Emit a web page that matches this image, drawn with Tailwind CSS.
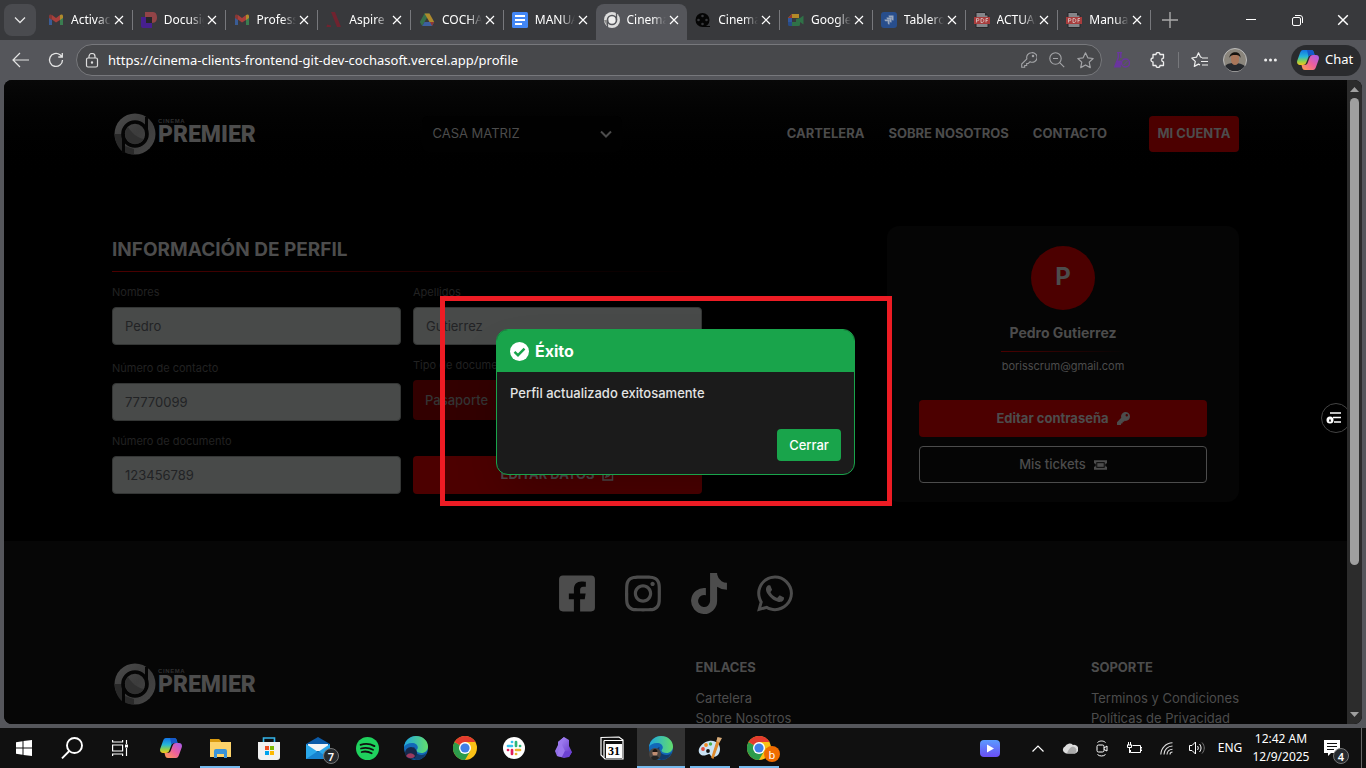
<!DOCTYPE html>
<html lang="es">
<head>
<meta charset="utf-8">
<title>Cinema Premier - Perfil</title>
<script src="https://cdn.jsdelivr.net/npm/@tailwindcss/browser@4"></script>
</head>
<body class="flex h-screen flex-col overflow-hidden bg-[#55565b] font-['Noto_Sans',sans-serif] text-white">
<svg class="absolute size-0" aria-hidden="true">
  <defs>
    <linearGradient id="cp1" x1="0" y1="0" x2="0" y2="1"><stop offset="0" stop-color="#1473e6"/><stop offset=".45" stop-color="#26b7d6"/><stop offset=".75" stop-color="#8fd14a"/><stop offset="1" stop-color="#f7c41d"/></linearGradient>
    <linearGradient id="cp2" x1="1" y1="0" x2="0" y2="1"><stop offset="0" stop-color="#a45cf0"/><stop offset=".5" stop-color="#ee5f9c"/><stop offset="1" stop-color="#ffa04d"/></linearGradient>
    <linearGradient id="eg1" x1="0" y1="0" x2="1" y2="0"><stop offset="0" stop-color="#1fa7e0"/><stop offset="1" stop-color="#63dd6b"/></linearGradient>
    <linearGradient id="pl" x1="0" y1="0" x2="0" y2="1"><stop offset="0" stop-color="#5b9bff"/><stop offset="1" stop-color="#6a4df5"/></linearGradient>
    <linearGradient id="ob" x1="0" y1="0" x2="1" y2="1"><stop offset="0" stop-color="#b79cff"/><stop offset="1" stop-color="#5b2bc4"/></linearGradient>
    <linearGradient id="lg" x1="0" y1="0" x2="1" y2="1"><stop offset="0" stop-color="#4c4c4c"/><stop offset=".5" stop-color="#3c3c3c"/><stop offset="1" stop-color="#474747"/></linearGradient>
  </defs>
  <symbol id="x" viewBox="0 0 10 10"><path d="M1 1l8 8M9 1l-8 8" stroke="#fff" stroke-width="1.2" fill="none"/></symbol>
  <symbol id="gmail" viewBox="0 0 16 16"><path d="M1 4v9h3V7z" fill="#3a5c95"/><path d="M15 4v9h-3V7z" fill="#3a7d50"/><path d="M1 4l3-1 4 3 4-3v5L8 10.500 4 7.500z" fill="#a83f3b"/><path d="M1 4v2l3 2V3C2.500 2 1 2.500 1 4z" fill="#853835"/><path d="M15 4v2l-3 2V3c1.500-1 3-.5 3 1z" fill="#b08a2c"/></symbol>
  <symbol id="pdf" viewBox="0 0 16 16"><path d="M2 .5h9l3 3v12H2z" fill="#858589" stroke="#26272a"/><path d="M11 .5v3h3z" fill="#26272a"/><rect y="5" width="16" height="7" fill="#a83c3c"/><path d="M2.500 10.500v-4h1.300a1 1 0 010 2.200H2.500M7 6.500v4h1c2.500 0 2.500-4 0-4zM12 10.500v-4h2M12 8.500h1.700" stroke="#d5bcbc" fill="none" stroke-width=".9"/></symbol>
  <symbol id="copilot" viewBox="0 0 22 20"><path d="M6 0h8c2 0 2.500 1 3 3l.5 2h-3c-2 0-3 1-3.500 3L9.500 12c-.7 2-1.500 3-3.500 3H3c-2.500 0-3.500-2-2.700-4.500L3 3C3.700 1 4.500 0 6 0z" fill="url(#cp1)"/><path d="M16 20H8c-2 0-2.500-1-3-3l-.5-2h3c2 0 3-1 3.500-3L12.500 8c.7-2 1.500-3 3.500-3h3c2.500 0 3.500 2 2.700 4.500L19 17c-.7 2-1.500 3-3 3z" fill="url(#cp2)"/><path d="M10 0h4c2 0 2.500 1 3 3l.5 2h-3c-1.500 0-2.500.5-3 2z" fill="#1659c9"/></symbol>
  <symbol id="chrome" viewBox="0 0 24 24"><circle cx="12" cy="12" r="12" fill="#fbc116"/><path d="M12 12L1.600 6A12 12 0 0012 24l5.200-9z" fill="#2c9c4b"/><path d="M12 12L1.600 6a12 12 0 0120.800 0H12z" fill="#e33b2e"/><circle cx="12" cy="12" r="6" fill="#fff"/><circle cx="12" cy="12" r="4.600" fill="#3f7fe8"/></symbol>
  <symbol id="edge" viewBox="0 0 24 24"><circle cx="12" cy="12" r="12" fill="#1268b8"/><path d="M0 11C1 4 6 0 12 0c7 0 12 5 12 10.500 0 4-3 6.500-6.500 6.500-3 0-5-1-5-2.500 0-.8 1.300-1.300 1.300-3C13.800 9 11.500 7 8 7c-4 0-7 2-8 4z" fill="url(#eg1)"/><path d="M23 16c-2 5-6 8-11 8-4-2-6-5-5-9 .5-2 2-3.500 3.500-4-1 4 2 8 7 8 2.500 0 4-1 5.500-3z" fill="#123a6c"/></symbol>
  <symbol id="mark" viewBox="0 0 42 42"><circle cx="21" cy="21" r="20.500" fill="url(#lg)"/><path d="M.5 21h10v19C5 37 1 30 .5 21z" fill="#292929"/><path d="M11 33l9 3v5.500c-4 0-7-1-9-2z" fill="#2a2a2a"/><circle cx="21" cy="21" r="12" fill="none" stroke="#050505" stroke-width="3.600"/><path d="M32.500 4v18M9.500 21v19" stroke="#050505" stroke-width="3"/><path d="M14 14a10 10 0 007 17c4 0 7-2 9-5C23 25 18 20 14 14z" fill="#303030"/></symbol>
</svg>

<!-- Tab strip -->
<header class="flex h-10 shrink-0 items-center bg-[#38393c] pl-1 text-xs">
  <button aria-label="Buscar pestañas" class="mr-1 grid size-8 place-items-center rounded-lg bg-[#4a4b4f]"><svg class="size-3" viewBox="0 0 12 12"><path d="M1 3.500l5 5 5-5" fill="none" stroke="#e5e5e5" stroke-width="1.300"/></svg></button>
  <nav class="flex h-full w-[1111px] items-center">
    <a href="#" class="flex h-5 w-0 flex-1 items-center border-r border-[#77787c] px-2"><svg class="size-4 shrink-0"><use href="#gmail"/></svg><span class="mr-[3px] ml-[7px] w-0 flex-1 overflow-hidden whitespace-nowrap [mask-image:linear-gradient(to_right,black_65%,transparent)]">Activación</span><svg class="size-[10px] shrink-0"><use href="#x"/></svg></a>
    <a href="#" class="flex h-5 w-0 flex-1 items-center border-r border-[#77787c] px-2"><svg class="size-4 shrink-0" viewBox="0 0 16 16"><path d="M0 5h5v6h6v5H2a2 2 0 01-2-2z" fill="#47208f"/><path d="M4 0h8c3 0 4 3 4 5.500S15 11 11 11V5H4z" fill="#924447"/><path d="M5 5h6v6H5z" fill="#26262a"/></svg><span class="mr-[3px] ml-[7px] w-0 flex-1 overflow-hidden whitespace-nowrap [mask-image:linear-gradient(to_right,black_65%,transparent)]">Docusign</span><svg class="size-[10px] shrink-0"><use href="#x"/></svg></a>
    <a href="#" class="flex h-5 w-0 flex-1 items-center border-r border-[#77787c] px-2"><svg class="size-4 shrink-0"><use href="#gmail"/></svg><span class="mr-[3px] ml-[7px] w-0 flex-1 overflow-hidden whitespace-nowrap [mask-image:linear-gradient(to_right,black_65%,transparent)]">Professional</span><svg class="size-[10px] shrink-0"><use href="#x"/></svg></a>
    <a href="#" class="flex h-5 w-0 flex-1 items-center border-r border-[#77787c] px-2"><svg class="size-4 shrink-0" viewBox="0 0 16 16"><path d="M5 0h4l6 15h-4zM1 12.500l4 1v1.500H.5z" fill="#70232f"/></svg><span class="mr-[3px] ml-[7px] w-0 flex-1 overflow-hidden whitespace-nowrap [mask-image:linear-gradient(to_right,black_65%,transparent)]">Aspire</span><svg class="size-[10px] shrink-0"><use href="#x"/></svg></a>
    <a href="#" class="flex h-5 w-0 flex-1 items-center border-r border-[#77787c] px-2"><svg class="size-4 shrink-0" viewBox="0 0 16 16"><path d="M5.500 1.500h5L5.500 10l-2.300 4L.8 10z" fill="#37704b"/><path d="M5.500 1.500h5l4.700 8.500h-4.700z" fill="#ae8a2d"/><path d="M5.500 10h9.700L13 14H3.200z" fill="#3c60a0"/><path d="M11 10h4.200L13 14z" fill="#8e3636"/></svg><span class="mr-[3px] ml-[7px] w-0 flex-1 overflow-hidden whitespace-nowrap [mask-image:linear-gradient(to_right,black_65%,transparent)]">COCHASOFT</span><svg class="size-[10px] shrink-0"><use href="#x"/></svg></a>
    <a href="#" class="flex h-5 w-0 flex-1 items-center px-2"><svg class="size-4 shrink-0" viewBox="0 0 16 16"><rect width="16" height="16" rx="1.500" fill="#4387f5"/><path d="M3 4h10M3 8h10M3 12h7" stroke="#fff" stroke-width="2"/></svg><span class="mr-[3px] ml-[7px] w-0 flex-1 overflow-hidden whitespace-nowrap [mask-image:linear-gradient(to_right,black_65%,transparent)]">MANUAL DE</span><svg class="size-[10px] shrink-0"><use href="#x"/></svg></a>
    <a href="#" aria-current="page" class="mt-1 flex h-9 w-0 flex-1 items-center rounded-t-lg bg-[#55565b] px-2 pb-1"><svg class="size-4 shrink-0" viewBox="0 0 16 16"><circle cx="8" cy="8" r="8" fill="#ddd"/><circle cx="8" cy="8" r="4.500" fill="#eee" stroke="#55565b" stroke-width="1.600"/><path d="M12.500 1v7M3.500 8v7" stroke="#55565b" stroke-width="1.300"/><path d="M0 8h3v6z" fill="#888"/></svg><span class="mr-[3px] ml-[7px] w-0 flex-1 overflow-hidden whitespace-nowrap [mask-image:linear-gradient(to_right,black_65%,transparent)]">Cinema Premier</span><svg class="size-[10px] shrink-0"><use href="#x"/></svg></a>
    <a href="#" class="flex h-5 w-0 flex-1 items-center border-r border-[#77787c] px-2"><svg class="size-4 shrink-0" viewBox="0 0 16 16"><circle cx="7.500" cy="8" r="7" fill="#050505"/><path d="M8 14.500h7" stroke="#050505"/><g fill="#38393c"><circle cx="7.500" cy="4" r="1.300"/><circle cx="7.500" cy="12" r="1.300"/><circle cx="3.500" cy="8" r="1.300"/><circle cx="11.500" cy="8" r="1.300"/></g></svg><span class="mr-[3px] ml-[7px] w-0 flex-1 overflow-hidden whitespace-nowrap [mask-image:linear-gradient(to_right,black_65%,transparent)]">Cinema Admin</span><svg class="size-[10px] shrink-0"><use href="#x"/></svg></a>
    <a href="#" class="flex h-5 w-0 flex-1 items-center border-r border-[#77787c] px-2"><svg class="size-4 shrink-0" viewBox="0 0 16 16"><path d="M4 2h7v4H4v4H0V6z" fill="#b38a28"/><path d="M4 2v4H0z" fill="#93352f"/><path d="M0 6h4v4H0z" fill="#31579c"/><path d="M0 10h4v4H1.500A1.500 1.500 0 010 12.500z" fill="#284b87"/><path d="M4 10h4V7l4-1v6.500a1.500 1.500 0 01-1.500 1.500H4zM12 6l3.500-2.500v9L12 10z" fill="#2f7147"/></svg><span class="mr-[3px] ml-[7px] w-0 flex-1 overflow-hidden whitespace-nowrap [mask-image:linear-gradient(to_right,black_65%,transparent)]">Google Meet</span><svg class="size-[10px] shrink-0"><use href="#x"/></svg></a>
    <a href="#" class="flex h-5 w-0 flex-1 items-center border-r border-[#77787c] px-2"><svg class="size-4 shrink-0" viewBox="0 0 16 16"><rect width="16" height="16" rx="3" fill="#284e8c"/><path d="M7.500 3.500h5v5c-1.200 0-1.800-.6-1.800-1.500V5.300H9c-.9 0-1.500-.6-1.500-1.800zM5.500 5.500h5v5c-1.200 0-1.800-.6-1.800-1.500V7.300H7c-.9 0-1.500-.6-1.500-1.800zM3.500 7.500h5v5c-1.200 0-1.800-.6-1.800-1.500V9.300H5c-.9 0-1.500-.6-1.500-1.800z" fill="#9aa8bd"/></svg><span class="mr-[3px] ml-[7px] w-0 flex-1 overflow-hidden whitespace-nowrap [mask-image:linear-gradient(to_right,black_65%,transparent)]">Tablero de</span><svg class="size-[10px] shrink-0"><use href="#x"/></svg></a>
    <a href="#" class="flex h-5 w-0 flex-1 items-center border-r border-[#77787c] px-2"><svg class="size-4 shrink-0"><use href="#pdf"/></svg><span class="mr-[3px] ml-[7px] w-0 flex-1 overflow-hidden whitespace-nowrap [mask-image:linear-gradient(to_right,black_65%,transparent)]">ACTUALIZAR</span><svg class="size-[10px] shrink-0"><use href="#x"/></svg></a>
    <a href="#" class="flex h-5 w-0 flex-1 items-center border-r border-[#77787c] px-2"><svg class="size-4 shrink-0"><use href="#pdf"/></svg><span class="mr-[3px] ml-[7px] w-0 flex-1 overflow-hidden whitespace-nowrap [mask-image:linear-gradient(to_right,black_65%,transparent)]">Manual de</span><svg class="size-[10px] shrink-0"><use href="#x"/></svg></a>
  </nav>
  <button aria-label="Nueva pestaña" class="grid h-10 w-[38px] place-items-center"><svg class="size-4" viewBox="0 0 16 16"><path d="M8 0v16M0 8h16" stroke="#aaa" stroke-width="1.400"/></svg></button>
  <div class="ml-auto flex h-10">
    <button aria-label="Minimizar" class="grid w-[46px] place-items-center"><svg class="size-[10px]" viewBox="0 0 10 10"><path d="M0 4.500h10" stroke="#fff"/></svg></button>
    <button aria-label="Restaurar" class="grid w-[46px] place-items-center"><svg class="size-[11px]" viewBox="0 0 11 11" fill="none" stroke="#fff"><rect x=".5" y="2.500" width="8" height="8" rx="1.500"/><path d="M3 .5h5a2.500 2.500 0 012.500 2.500v5"/></svg></button>
    <button aria-label="Cerrar ventana" class="grid w-[46px] place-items-center"><svg class="size-3"><use href="#x"/></svg></button>
  </div>
</header>

<!-- Toolbar -->
<div class="flex h-10 shrink-0 items-center pr-[5px] pl-2">
  <button aria-label="Atrás" class="grid w-6 place-items-center"><svg class="h-4 w-[17px]" viewBox="0 0 17 16"><path d="M8 1L1 8l7 7M1 8h16" fill="none" stroke="#e4e4e4" stroke-width="1.200"/></svg></button>
  <button aria-label="Recargar" class="ml-3 grid w-6 place-items-center"><svg class="size-4" viewBox="0 0 16 16"><path d="M14.500 8A6.500 6.500 0 1112 2.800L14 4.500M14.300 1v4h-4" fill="none" stroke="#e4e4e4" stroke-width="1.300"/></svg></button>
  <div class="ml-2 flex h-8 min-w-0 flex-1 items-center rounded-full border border-[#77787c] bg-[#47484b] pr-[7px] pl-[7px]">
    <svg class="h-[15px] w-4 shrink-0" viewBox="0 0 16 15" fill="none" stroke="#ddd" stroke-width="1.200"><rect x="2.500" y="5" width="11" height="9" rx="1.500"/><path d="M5 5V3.500a3 3 0 016 0V5"/><circle cx="8" cy="9.500" r=".6" fill="#ddd"/></svg>
    <input aria-label="Dirección" class="ml-2 w-0 min-w-0 flex-1 bg-transparent pt-px text-[13px] text-white outline-none" value="https://cinema-clients-frontend-git-dev-cochasoft.vercel.app/profile">
    <svg class="size-4 shrink-0" viewBox="0 0 16 16" fill="none" stroke="#a4a5a8" stroke-width="1.100"><path d="M10.500.7a4.800 4.800 0 00-4.600 6.200L.7 12v3.300h3V13.500h2V11.500h1.600l1.800-1.800A4.800 4.800 0 1010.500.7z"/><circle cx="12" cy="4" r=".7"/></svg>
    <svg class="ml-3 size-4 shrink-0" viewBox="0 0 16 16" fill="none" stroke="#a4a5a8" stroke-width="1.100"><circle cx="6.500" cy="6.500" r="5.700"/><path d="M10.700 10.700l4.500 4.500M4 6.500h5"/></svg>
    <svg class="ml-3 size-[17px] shrink-0" viewBox="0 0 16 16" fill="none" stroke="#a4a5a8" stroke-width="1.100" stroke-linejoin="round"><path d="M8 .8l2.200 4.700 5 .6-3.700 3.500 1 5.100L8 12.200l-4.500 2.500 1-5.100L.8 6.100l5-.6z"/></svg>
  </div>
  <div class="ml-3 flex shrink-0 items-center">
    <svg class="size-4" viewBox="0 0 16 16"><path d="M3 .6h5M4.300 .6v5L.7 14.800h6M6.800 .6v5.500" fill="none" stroke="#6a359f" stroke-width="1.400"/><path d="M3 8.500h4.500l-1 6.500H.7z" fill="#6a359f"/><circle cx="11.500" cy="11" r="4" fill="#55565b" stroke="#6a359f" stroke-width="1.400"/><path d="M9.500 13l4-4" stroke="#6a359f"/></svg>
    <svg class="ml-5 size-4" viewBox="0 0 16 16"><path d="M3 2.500h3a2 2 0 014 0h3.500v3.700a1.800 1.800 0 000 3.600v3.700H10a2 2 0 01-4 0H3V10a2 2 0 010-4z" fill="none" stroke="#eee" stroke-width="1.300" stroke-linejoin="round"/></svg>
    <span class="mx-3 h-4 w-px bg-[#77787c]"></span>
    <svg class="h-4 w-[17px]" viewBox="0 0 17 16" fill="none" stroke="#eee" stroke-width="1.200"><path d="M11 5.500L9.500 5 7.500.8 5.500 5.200.8 6l3.500 3.400-1 5 4.200-2.300 1.500.8M11 6h6M10 9.500h7M11 13h6" stroke-linejoin="round"/></svg>
    <svg class="ml-[15px] size-6" viewBox="0 0 24 24"><circle cx="12" cy="12" r="11.500" fill="#8a857c" stroke="#bbb"/><path d="M2 18c3-3 6-3 10-3s7 1 10 3a12 12 0 01-20 0z" fill="#26282d"/><path d="M8 8c0-3 8-3 8 0v4c0 3-2 5-4 5s-4-2-4-5z" fill="#a9765a"/><path d="M6.500 10C6 3 18 2 17.500 10c-1-3-3-3-5.500-3s-4.500 0-5.500 3z" fill="#17130f"/></svg>
    <svg class="ml-[17px] h-1 w-[13px]" viewBox="0 0 13 4" fill="#eee"><circle cx="1.600" cy="2" r="1.500"/><circle cx="6.500" cy="2" r="1.500"/><circle cx="11.400" cy="2" r="1.500"/></svg>
    <button class="ml-[14px] flex h-[31px] w-[70px] items-center rounded-full bg-[#2a2b2e] pl-[6px] text-[13px]"><svg class="mr-[6px] h-5 w-[22px] shrink-0"><use href="#copilot"/></svg>Chat</button>
  </div>
</div>

<!-- Web page -->
<div class="mx-1 mb-1 flex min-h-0 flex-1 overflow-hidden rounded-lg bg-black font-['Inter',sans-serif]">
  <div class="relative min-w-0 flex-1 overflow-hidden text-[#4c4c4c]">
    <div class="flex h-[108px] items-center justify-between bg-linear-to-b from-[#080808] to-black px-[108px]">
      <a href="#" class="flex items-center pl-[2px]"><svg class="size-[42px]"><use href="#mark"/></svg><span class="ml-[2px] flex w-[100px] flex-col pb-1"><span class="font-['Liberation_Sans',sans-serif] text-[6px] leading-[6px] font-bold tracking-widest text-[#303030]">CINEMA</span><span class="font-['Roboto',sans-serif] text-[23px] leading-[22px] font-black">PREMIER</span></span></a>
      <div class="relative h-9 w-[200px]">
        <select aria-label="Sucursal" class="h-full w-full appearance-none rounded-md bg-[#010101] px-[10px] text-[13px]"><option>CASA MATRIZ</option></select>
        <svg class="pointer-events-none absolute top-3 right-[10px] size-3" viewBox="0 0 12 12"><path d="M1 3.500l5 5 5-5" fill="none" stroke="#4c4c4c" stroke-width="2"/></svg>
      </div>
      <nav class="flex items-center gap-6 text-[13px] font-bold">
        <a href="#">CARTELERA</a><a href="#">SOBRE NOSOTROS</a><a href="#">CONTACTO</a>
        <button class="ml-[18px] h-9 w-[90px] rounded bg-[#4c0000]">MI CUENTA</button>
      </nav>
    </div>

    <main class="flex h-[353px] items-start justify-between px-[108px] pt-[38px]">
      <form class="w-[590px] pt-[10px]">
        <h1 class="text-[19px] leading-7 font-bold">INFORMACIÓN DE PERFIL</h1>
        <div class="mt-[7px] h-px bg-linear-to-r from-[#4c0000] to-transparent"></div>
        <div class="mt-3 grid grid-cols-2 gap-3 text-[13px]">
          <div class="flex flex-col">
            <label for="nom" class="mb-[7px] text-[11px] leading-4 text-[#222]">Nombres</label>
            <input id="nom" value="Pedro" class="h-[38px] rounded border border-[#343635] bg-[#484a49] px-3 pb-px text-[#222325]">
            <label for="tel" class="mt-[15px] mb-[7px] text-[11px] leading-4 text-[#222]">Número de contacto</label>
            <input id="tel" value="77770099" class="h-[38px] rounded border border-[#343635] bg-[#484a49] px-3 pb-px text-[#222325]">
            <label for="doc" class="mt-3 mb-[7px] text-[11px] leading-4 text-[#222]">Número de documento</label>
            <input id="doc" value="123456789" class="h-[38px] rounded border border-[#343635] bg-[#484a49] px-3 text-[#222325]">
          </div>
          <div class="flex flex-col">
            <label for="ape" class="mb-[7px] text-[11px] leading-4 text-[#222]">Apellidos</label>
            <input id="ape" value="Gutierrez" class="h-[38px] rounded border border-[#343635] bg-[#484a49] px-3 pb-px text-[#222325]">
            <label for="tipo" class="mt-3 mb-[7px] text-[11px] leading-4 text-[#222]">Tipo de documento</label>
            <select id="tipo" class="h-10 appearance-none rounded bg-[#320000] px-3 pt-px font-medium text-[#343434]"><option>Pasaporte</option></select>
            <button type="button" class="mt-9 flex h-[38px] items-center justify-center gap-2 rounded bg-[#4c0000] font-bold">EDITAR DATOS<svg class="size-3" viewBox="0 0 12 12" fill="none" stroke="#4c4c4c" stroke-width="1.500"><path d="M7 1.500H1v9.500h9.500V6M4 8l1-2.500L9.500 1l1.500 1.500L6.500 7z"/></svg></button>
          </div>
        </div>
      </form>

      <aside class="flex h-[276px] w-[352px] flex-col items-center rounded-xl bg-[#050505] px-8 pt-5">
        <div class="grid size-16 place-items-center rounded-full bg-[#4c0000] pb-[2px] text-2xl font-bold">P</div>
        <h2 class="mt-3 text-[14px] leading-[22px] font-bold">Pedro Gutierrez</h2>
        <div class="mt-[7px] h-px w-[125px] bg-linear-to-r from-[#4c0000] to-transparent"></div>
        <p class="mt-[6px] text-[11px] leading-4">borisscrum@gmail.com</p>
        <button class="mt-[26px] flex h-[37px] w-full shrink-0 items-center justify-center gap-2 rounded bg-[#4c0000] text-[13px] font-bold">Editar contraseña<svg class="size-[13px]" viewBox="0 0 512 512" fill="#4c4c4c"><path d="M512 176C512 273.200 433.200 352 336 352c-11.200 0-22.200-1-32.800-3l-24 27a24 24 0 01-18 8H224v40c0 13.300-10.700 24-24 24h-40v40c0 13.300-10.700 24-24 24H24c-13.300 0-24-10.700-24-24v-78c0-6.400 2.500-12.500 7-17l161.800-161.800A176 176 0 11512 176zM336 128a48 48 0 1096 0 48 48 0 00-96 0z"/></svg></button>
        <button class="mt-[9px] flex h-[37px] w-full shrink-0 items-center justify-center gap-2 rounded border border-[#4c4c4c] text-[13px] font-medium">Mis tickets<svg class="h-[10px] w-[13px]" viewBox="0 0 14 10"><path d="M0 0h14v3a2 2 0 000 4v3H0V7a2 2 0 000-4z" fill="#4c4c4c"/><rect x="3" y="2.500" width="8" height="5" fill="#4c4c4c" stroke="#050505"/></svg></button>
      </aside>
    </main>

    <footer class="bg-[#060606] px-[108px] pt-8 pb-10">
      <div class="flex justify-center gap-[30px]">
        <a href="#" aria-label="Facebook"><svg class="h-[41px] w-9" viewBox="0 0 448 512" fill="#4c4c4c"><path d="M400 32H48A48 48 0 0 0 0 80v352a48 48 0 0 0 48 48h137.250V327.690h-63V256h63v-54.640c0-62.150 37-96.480 93.670-96.480 27.140 0 55.520 4.840 55.520 4.840v61h-31.270c-30.810 0-40.420 19.120-40.420 38.730V256h68.780l-11 71.690h-57.780V480H400a48 48 0 0 0 48-48V80a48 48 0 0 0-48-48z"/></svg></a>
        <a href="#" aria-label="Instagram"><svg class="h-[41px] w-9" viewBox="0 0 448 512" fill="#4c4c4c"><path d="M224.100 141c-63.600 0-114.900 51.300-114.900 114.900s51.300 114.900 114.900 114.900S339 319.500 339 255.900 287.700 141 224.100 141zm0 189.600c-41.100 0-74.700-33.500-74.700-74.700s33.500-74.700 74.700-74.700 74.700 33.500 74.700 74.700-33.600 74.700-74.700 74.700zm146.400-194.300c0 14.900-12 26.800-26.800 26.800-14.900 0-26.800-12-26.800-26.800s12-26.800 26.800-26.800 26.800 12 26.800 26.800zm76.100 27.200c-1.700-35.900-9.900-67.700-36.200-93.900-26.200-26.200-58-34.400-93.900-36.200-37-2.100-147.900-2.100-184.900 0-35.800 1.700-67.600 9.900-93.900 36.100s-34.400 58-36.200 93.900c-2.100 37-2.100 147.900 0 184.900 1.700 35.900 9.900 67.700 36.200 93.900s58 34.400 93.900 36.200c37 2.100 147.900 2.100 184.900 0 35.900-1.700 67.700-9.900 93.900-36.200 26.200-26.200 34.400-58 36.200-93.900 2.100-37 2.100-147.800 0-184.800zM398.800 388c-7.800 19.600-22.900 34.700-42.600 42.600-29.500 11.700-99.500 9-132.100 9s-102.700 2.600-132.100-9c-19.600-7.800-34.700-22.900-42.600-42.600-11.700-29.500-9-99.500-9-132.100s-2.600-102.700 9-132.100c7.800-19.600 22.900-34.700 42.600-42.600 29.500-11.700 99.500-9 132.100-9s102.700-2.600 132.100 9c19.600 7.800 34.700 22.900 42.600 42.600 11.700 29.500 9 99.500 9 132.100s2.700 102.700-9 132.100z"/></svg></a>
        <a href="#" aria-label="TikTok"><svg class="h-[41px] w-9" viewBox="0 0 448 512" fill="#4c4c4c"><path d="M448,209.910a210.060,210.060,0,0,1-122.770-39.250V349.380A162.550,162.550,0,1,1,185,188.310V278.200a74.620,74.620,0,1,0,52.230,71.180V0l88,0a121.180,121.180,0,0,0,1.860,22.170h0A122.180,122.180,0,0,0,381,102.390a121.430,121.430,0,0,0,67,20.140Z"/></svg></a>
        <a href="#" aria-label="WhatsApp"><svg class="h-[41px] w-9" viewBox="0 0 448 512" fill="#4c4c4c"><path d="M380.900 97.100C339 55.100 283.200 32 223.900 32c-122.400 0-222 99.600-222 222 0 39.100 10.200 77.300 29.600 111L0 480l117.700-30.900c32.400 17.700 68.900 27 106.100 27h.1c122.300 0 224.100-99.600 224.100-222 0-59.300-25.200-115-67.100-157zm-157 341.600c-33.200 0-65.700-8.900-94-25.700l-6.700-4-69.800 18.300L72 359.200l-4.400-7c-18.500-29.400-28.200-63.300-28.200-98.200 0-101.700 82.800-184.500 184.600-184.500 49.300 0 95.600 19.200 130.400 54.100 34.800 34.900 56.200 81.200 56.100 130.500 0 101.800-84.900 184.600-186.600 184.600zm101.200-138.200c-5.500-2.800-32.800-16.200-37.900-18-5.100-1.900-8.800-2.800-12.500 2.800-3.700 5.600-14.300 18-17.600 21.800-3.200 3.700-6.500 4.200-12 1.400-32.600-16.300-54-29.100-75.500-66-5.700-9.800 5.700-9.100 16.300-30.300 1.800-3.700.9-6.900-.5-9.700-1.400-2.800-12.500-30.100-17.100-41.200-4.500-10.800-9.100-9.300-12.500-9.500-3.200-.2-6.900-.2-10.600-.2-3.700 0-9.700 1.400-14.800 6.900-5.100 5.600-19.400 19-19.400 46.300 0 27.300 19.900 53.700 22.600 57.400 2.800 3.700 39.100 59.700 94.800 83.800 35.200 15.200 49 16.500 66.600 13.900 10.700-1.600 32.800-13.400 37.400-26.400 4.600-13 4.600-24.100 3.200-26.400-1.300-2.500-5-3.900-10.500-6.600z"/></svg></a>
      </div>
      <div class="mt-[43px] flex items-start justify-between text-[13px] leading-5">
        <a href="#" class="mt-[6px] flex w-[284px] items-center pl-[2px]"><svg class="size-[42px]"><use href="#mark"/></svg><span class="ml-[2px] flex flex-col pb-1"><span class="font-['Liberation_Sans',sans-serif] text-[6px] leading-[6px] font-bold tracking-widest text-[#303030]">CINEMA</span><span class="font-['Roboto',sans-serif] text-[23px] leading-[22px] font-black">PREMIER</span></span></a>
        <div class="flex flex-col"><h3 class="mb-[11px] leading-5 font-bold">ENLACES</h3><a href="#">Cartelera</a><a href="#">Sobre Nosotros</a></div>
        <div class="flex flex-col"><h3 class="mb-[11px] leading-5 font-bold">SOPORTE</h3><a href="#">Terminos y Condiciones</a><a href="#">Políticas de Privacidad</a></div>
      </div>
    </footer>

    <!-- Side widget -->
    <button aria-label="Panel lateral" class="absolute top-[323px] -right-[4px] grid size-[30px] place-items-center rounded-full border border-[#444] bg-black"><svg class="-ml-1 h-3 w-4" viewBox="0 0 16 12"><path d="M4 1h11M7 5.500h8M8 10h7" stroke="#fff" stroke-width="1.300"/><circle cx="4" cy="8" r="3.500" fill="#fff"/><path d="M2.800 9.500L4 6.500l1.200 3z" fill="#000"/></svg></button>

    <!-- Success dialog -->
    <div class="absolute inset-0 grid place-items-center">
      <section role="dialog" aria-labelledby="dlg" class="w-[359px] overflow-hidden rounded-xl border border-[#19a44b] bg-[#1b1b1b] text-[#e4e4e4] shadow-2xl">
        <div class="flex h-[42px] items-center gap-[6px] bg-[#19a44b] px-[13px] text-white">
          <svg class="size-[19px]" viewBox="0 0 19 19"><circle cx="9.500" cy="9.500" r="9.500" fill="#fff"/><path d="M4.500 9.800l3.500 3.400 6.500-6.500" fill="none" stroke="#19a44b" stroke-width="2.400"/></svg>
          <h2 id="dlg" class="text-base font-bold">Éxito</h2>
        </div>
        <div class="flex flex-col px-[13px] pt-3 pb-[13px] text-[13px] leading-[18px] font-medium">
          <p>Perfil actualizado exitosamente</p>
          <button class="mt-[27px] h-8 w-16 self-end rounded bg-[#19a44b] text-white">Cerrar</button>
        </div>
      </section>
    </div>
    <div class="pointer-events-none absolute top-[216px] left-[436px] h-[210px] w-[452px] border-[5px] border-[#ed1c24]"></div>
  </div>
  <div class="flex w-[15px] shrink-0 flex-col items-center justify-between bg-[#2c2c2c] py-[7px]">
    <svg class="h-[5px] w-[9px]" viewBox="0 0 9 5"><path d="M0 5l4.500-5L9 5z" fill="#9f9f9f"/></svg>
    <div class="mt-[6px] mb-auto h-[467px] w-[9px] rounded-full bg-[#9f9f9f]"></div>
    <svg class="h-[5px] w-[9px]" viewBox="0 0 9 5"><path d="M0 0l4.500 5L9 0z" fill="#9f9f9f"/></svg>
  </div>
</div>

<!-- Taskbar -->
<footer class="flex h-10 shrink-0 bg-[#101010]">
  <div class="flex">
    <button aria-label="Inicio" class="grid w-12 place-items-center"><svg class="size-4" viewBox="0 0 16 16" fill="#fff"><path d="M0 2.200l6.500-.9v6.200H0zM7.500 1.100L16 0v7.500H7.500zM0 8.500h6.500v6.200L0 13.800zM7.500 8.500H16V16l-8.500-1.100z"/></svg></button>
    <button aria-label="Buscar" class="grid w-12 place-items-center"><svg class="size-[22px]" viewBox="0 0 22 22" fill="none" stroke="#fff" stroke-width="1.900"><circle cx="13.500" cy="8.500" r="7.500"/><path d="M8.300 14L1 21.300"/></svg></button>
    <button aria-label="Vista de tareas" class="grid w-12 place-items-center"><svg class="size-4" viewBox="0 0 16 16" fill="none" stroke="#fff" stroke-width="1.200"><path d="M.6 0v2h10V0M.6 16v-2h10v2M.6 5h10v6H.6zM14.500 0v4M14.500 8v8"/><path d="M13 4.500h3v3h-3z" fill="#fff" stroke="none"/></svg></button>
  </div>
  <div class="ml-[3px] flex gap-px">
    <button aria-label="Copilot" class="grid w-12 place-items-center"><svg class="h-5 w-[22px]"><use href="#copilot"/></svg></button>
    <button aria-label="Explorador" class="relative grid w-12 place-items-center"><svg class="h-[19px] w-[21px]" viewBox="0 0 21 19"><path d="M0 0h9l2 2v4H0z" fill="#d99a10"/><path d="M0 3h21v15H0z" fill="#fdd36a"/><path d="M4 19v-7a2 2 0 012-2h9a2 2 0 012 2v7h-3v-4H7v4z" fill="#3a94d8"/></svg><span class="absolute bottom-0 h-[2px] w-10 bg-[#76b9ed]"></span></button>
    <button aria-label="Store" class="grid w-12 place-items-center"><svg class="h-[23px] w-6" viewBox="0 0 24 23"><path d="M6.500 6V1h11v5" fill="none" stroke="#35b5ea" stroke-width="1.600"/><path d="M1 5h22v15a3 3 0 01-3 3H4a3 3 0 01-3-3z" fill="#f1f1f1"/><path d="M8 9h4v4H8z" fill="#ef4f23"/><path d="M13 9h4v4h-4z" fill="#7eb900"/><path d="M8 14h4v4H8z" fill="#00a3ee"/><path d="M13 14h4v4h-4z" fill="#fdb900"/></svg></button>
    <button aria-label="Correo" class="relative grid w-12 place-items-center"><svg class="h-[22px] w-6" viewBox="0 0 24 22"><path d="M0 7l12-7 12 7v5H0z" fill="#0c5ba8"/><path d="M2 7h20v7H2z" fill="#f5f5f5"/><path d="M0 7l12 8 12-8v15H0z" fill="#2ba8ea"/><path d="M0 22l12-8 12 8z" fill="#1783cf"/></svg><span class="absolute right-[3px] bottom-1 grid size-4 place-items-center rounded-full border border-[#777] bg-[#262a2e] text-[11px] leading-none font-semibold">7</span></button>
    <button aria-label="Spotify" class="grid w-12 place-items-center"><svg class="size-[23px]" viewBox="0 0 23 23"><circle cx="11.500" cy="11.500" r="11.500" fill="#1fd15d"/><path d="M4.500 7.800c4.500-1.300 10-.9 14 1.300M5 11.500c4-1 8.500-.6 12 1.300M5.700 15c3-.8 6.800-.5 10 1.200" fill="none" stroke="#101010" stroke-width="1.800" stroke-linecap="round"/></svg></button>
    <button aria-label="Edge" class="grid w-12 place-items-center"><svg class="size-6" viewBox="0 0 24 24"><use href="#edge"/><circle cx="7" cy="17" r="6" fill="#16284a"/><path d="M2 20c3-4 7-3 9 0-2 3-6 3-9 0z" fill="#9c3b60"/></svg></button>
    <button aria-label="Chrome" class="grid w-12 place-items-center"><svg class="size-6"><use href="#chrome"/></svg></button>
    <button aria-label="Slack" class="grid w-12 place-items-center"><svg class="size-[22px]" viewBox="0 0 22 22"><circle cx="11" cy="11" r="11" fill="#fff"/><g stroke-width="2.700" stroke-linecap="round"><path d="M5 9h4M9 5h.1" stroke="#36c5f0"/><path d="M13 5v4M17 9h.1" stroke="#2eb67d"/><path d="M13 13h4M13 17h.1" stroke="#ecb22e"/><path d="M9 13v4M5 13h.1" stroke="#e01e5a"/></g></svg></button>
    <button aria-label="Obsidian" class="grid w-12 place-items-center"><svg class="h-[22px] w-[17px]" viewBox="0 0 17 22"><path d="M9 0l5 3v6l3 6-3 5-5 1-7-2-2-5 3-6V5z" fill="url(#ob)"/><path d="M9 0L7 8l3 6-3 6-5-1 2-8-1-3V5z" fill="#9a76ee"/><path d="M10 14l7 1-3 5-7 0z" fill="#6c42d4"/></svg></button>
    <button aria-label="Calendario" class="grid w-12 place-items-center"><svg class="size-6" viewBox="0 0 24 24"><path d="M1 1.500L19 1l4 3v19H5l-4-4z" fill="#101010" stroke="#fff" stroke-width="1.200"/><path d="M4 4.500h19M4 4.500v17" stroke="#fff" stroke-width="1.200"/><rect x="6" y="8" width="16" height="14" fill="#fff"/><text x="14" y="19" text-anchor="middle" font-family="Liberation Serif, serif" font-weight="700" font-size="12" fill="#000">31</text></svg></button>
    <button aria-label="Edge, perfil" class="relative grid w-12 place-items-center bg-[#333]"><svg class="size-6" viewBox="0 0 24 24"><use href="#edge"/><circle cx="6" cy="18" r="6" fill="#4b4542"/><circle cx="6" cy="17" r="2.600" fill="#c08d72"/><path d="M3.500 16c0-4 5-4 5 0z" fill="#1c1512"/><path d="M2 22c1-3 7-3 8 0-3 3-6 3-8 0z" fill="#222"/></svg><span class="absolute inset-x-0 bottom-0 h-[2px] bg-[#76b9ed]"></span></button>
    <button aria-label="Paint" class="relative grid w-12 place-items-center"><svg class="size-6" viewBox="0 0 24 24"><path d="M11 5c7-1 11 3 11 8s-3 8-7 8c-3 0-2-3-4-3-3 1-6 3-9 0-4-4 2-12 9-13z" fill="#c9e3f5"/><circle cx="5" cy="13" r="1.900" fill="#e14a3b"/><circle cx="8" cy="9" r="1.900" fill="#f08a24"/><circle cx="12.500" cy="8" r="1.700" fill="#49ae4d"/><circle cx="10" cy="15" r="1.900" fill="#111"/><path d="M22 3L15 22l-1-.5 6-19z" fill="#dd8a2e" stroke="#dd8a2e" stroke-width="1.400"/><path d="M18.500 5l1-4 4.500 1-2.500 4.500z" fill="#d7ab7a"/></svg><span class="absolute bottom-0 h-[2px] w-10 bg-[#76b9ed]"></span></button>
    <button aria-label="Chrome, perfil" class="relative grid w-12 place-items-center"><svg class="size-6"><use href="#chrome"/></svg><span class="absolute right-[3px] bottom-[6px] grid size-4 place-items-center rounded-full bg-[#ef6c00] text-[11px] leading-none">b</span><span class="absolute bottom-0 h-[2px] w-10 bg-[#76b9ed]"></span></button>
  </div>
  <div class="ml-auto flex items-center text-xs">
    <svg class="mr-[22px] h-[17px] w-5" viewBox="0 0 20 17"><rect width="20" height="17" rx="4" fill="url(#pl)"/><path d="M7 4.500l7 4-7 4z" fill="#fff"/></svg>
    <div class="grid w-8 place-items-center"><svg class="h-[7px] w-3" viewBox="0 0 12 7"><path d="M.5 6.500L6 1l5.500 5.500" fill="none" stroke="#fff" stroke-width="1.200"/></svg></div>
    <div class="grid w-8 place-items-center"><svg class="h-3 w-4" viewBox="0 0 16 12"><path d="M4 11.500A3.700 3.700 0 013 4.500 5 5 0 0111 3a4 4 0 012 8.500z" fill="#ddd"/><path d="M5 11.500C6 8 8 5 11 4.500a4 4 0 012 7z" fill="#aaa"/></svg></div>
    <div class="grid w-8 place-items-center"><svg class="h-[17px] w-3" viewBox="0 0 12 17" fill="none" stroke="#fff"><rect x="1" y="5" width="7" height="7" rx="1.500"/><path d="M8 8l3-2v5L8 9.500M1.500 2.500c2-2 6-2 8 0M1.500 14.500c2 2 6 2 8 0"/></svg></div>
    <div class="grid w-8 place-items-center"><svg class="h-3 w-4" viewBox="0 0 16 12" fill="none" stroke="#fff"><path d="M6.500 3.500h8v7H4.500V8M14.500 5.500H16v3h-1.500M1 3h5M2.500 0v3M4.500 0v3M1.500 3v2.500h4V3M3.500 6v5"/></svg></div>
    <div class="grid w-8 place-items-center"><svg class="size-[13px]" viewBox="0 0 13 13" fill="none" stroke="#ddd" stroke-width="1.100"><path d="M.8 12.500C1 6 6 1 12.500.8M4 12.500c0-5 4-8.500 8.500-8.500M7 12.500c0-3 2.500-5.300 5.500-5.300M10 12.500c0-1.500 1-2.500 2.500-2.500"/></svg></div>
    <div class="grid w-[30px] place-items-center"><svg class="h-[14px] w-4" viewBox="0 0 16 14" fill="none" stroke="#fff"><path d="M.5 4.500H3L6.500 1v12L3 9.500H.5zM8.500 5c1 1.300 1 2.700 0 4M10.500 3c2 2.500 2 5.500 0 8"/><path d="M13 1.500c3 3.500 3 7.500 0 11" stroke="#777"/></svg></div>
    <span class="w-9 text-center">ENG</span>
    <time class="w-[66px] text-center leading-[18px]">12:42 AM<br>12/9/2025</time>
    <button aria-label="Notificaciones" class="relative grid h-10 w-[48px] place-items-center border-r border-[#666]"><svg class="mr-3 size-4" viewBox="0 0 16 16"><path d="M0 0h16v13H7l-3 3v-3H0z" fill="#fff"/><path d="M3 3.500h10M3 6.500h10M3 9.500h7" stroke="#101010"/></svg><span class="absolute right-[12px] bottom-1 grid size-4 place-items-center rounded-full border border-[#777] bg-[#262a2e] text-[11px] leading-none font-semibold">4</span></button>
    <span class="w-1"></span>
  </div>
</footer>
</body>
</html>
